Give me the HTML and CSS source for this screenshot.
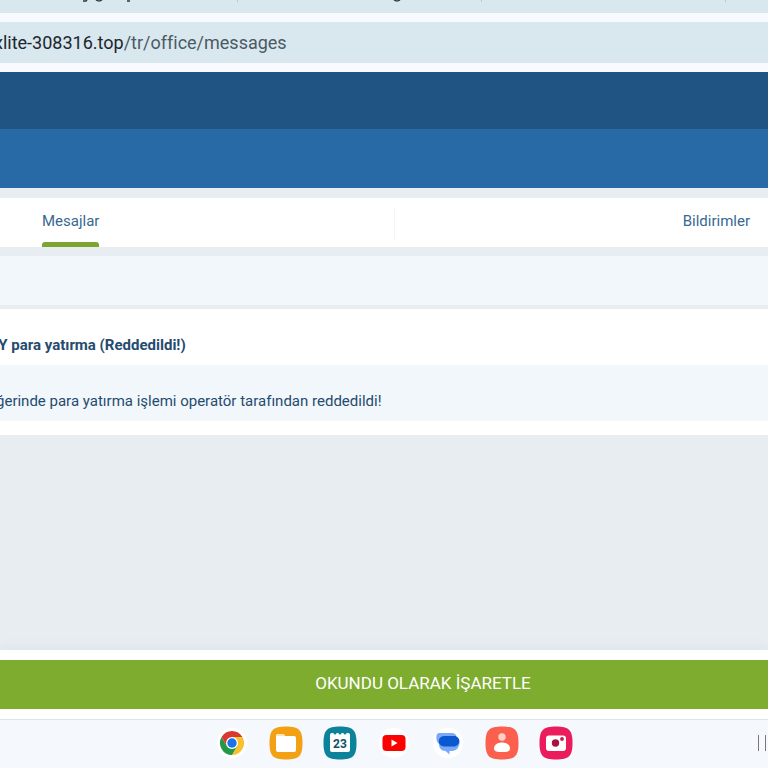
FILE: index.html
```html
<!DOCTYPE html>
<html lang="tr">
<head>
    <meta charset="UTF-8">
    <meta name="viewport" content="width=device-width, initial-scale=1.0">
    <title>Mesajlar</title>
    <link rel="stylesheet" href="styles.css">
</head>
<body>
    <div class="browser-bar">
        <div class="tab-strip">
            <svg class="tab-marks" width="768" height="4" aria-hidden="true">
                <path d="M83 1H86L87 0M96 0Q99 2 102 0M127 1H130M394 0Q397 2 400 0" fill="none" stroke="#2c3a42" stroke-width="1.500"/>
                <path d="M237.500 0V2M481.500 0V2M725.500 0V2" stroke="#b9c7ce"/>
            </svg>
        </div>
        <div class="address-bar"><span class="host">xlite-308316.top</span>/tr/office/messages</div>
    </div>

    <header class="site-header">
        <div class="header-top"></div>
        <div class="header-nav"></div>
    </header>

    <main class="office">
        <nav class="tabs">
            <a href="#mesajlar" class="tab active">Mesajlar</a>
            <a href="#bildirimler" class="tab">Bildirimler</a>
        </nav>
        <div class="filter-row"></div>
        <article class="message">
            <h2 class="message-title">RY para yatırma (Reddedildi!)</h2>
            <p class="message-text">ğerinde para yatırma işlemi operatör tarafından reddedildi!</p>
        </article>
    </main>

    <div class="actions">
        <button type="button" class="mark-read">OKUNDU OLARAK İŞARETLE</button>
    </div>

    <footer class="taskbar">
        <div class="apps">
            <svg class="app" viewBox="0 0 34 34">
                <circle cx="17" cy="17" r="15" fill="#fff"/>
                <path d="M17 11H27.400A12 12 0 0 1 17 29L22.200 20Z" fill="#fbc02d"/>
                <path d="M6.600 11A12 12 0 0 0 17 29L22.200 20 17 17 11.800 20Z" fill="#249847"/>
                <path d="M6.600 11A12 12 0 0 1 27.400 11H17V17L11.800 20Z" fill="#d93a30"/>
                <circle cx="17" cy="17" r="6" fill="#fff"/>
                <circle cx="17" cy="17" r="4.700" fill="#1a73e8"/>
            </svg>
            <svg class="app" viewBox="0 0 34 34">
                <path d="M17 .5C30 .5 33.500 4 33.500 17S30 33.500 17 33.500.5 30 .5 17 4 .5 17 .5Z" fill="#f3a114"/>
                <path d="M7 10Q7 8 9 8H14.500L16 10H25Q27 10 27 12V24Q27 26 25 26H9Q7 26 7 24Z" fill="#fff"/>
                <path d="M7 10Q7 8 9 8H14.500L16 10H7Z" fill="#fde3b0"/>
            </svg>
            <svg class="app" viewBox="0 0 34 34">
                <path d="M17 .5C30 .5 33.500 4 33.500 17S30 33.500 17 33.500.5 30 .5 17 4 .5 17 .5Z" fill="#0d839b"/>
                <path d="M7 9Q7 7 9 7H10.500A1.500 1.500 0 0 0 13.500 7H15.500A1.500 1.500 0 0 0 18.500 7H20.500A1.500 1.500 0 0 0 23.500 7H25Q27 7 27 9V24Q27 26 25 26H9Q7 26 7 24Z" fill="#fff"/>
                <text x="17" y="22" class="day">23</text>
            </svg>
            <svg class="app" viewBox="0 0 34 34">
                <circle cx="17" cy="17" r="15" fill="#fff"/>
                <rect x="5.500" y="9" width="23" height="16" rx="4" fill="#f00"/>
                <path d="M14.500 13.500V20.500L20.500 17Z" fill="#fff"/>
            </svg>
            <svg class="app" viewBox="0 0 34 34">
                <circle cx="17" cy="17" r="15" fill="#fff"/>
                <path d="M9 7H20C24 7 25.500 9 25.500 11 28 12 29 14 28.500 17 28 22 25 25 20.500 25H18.500V28.500L14.500 25C10 25 8 21.500 8 18 5.500 16 5 13 5.500 9.500 6 7.500 7 7 9 7Z" fill="#78a8f8"/>
                <path d="M13 10H23C30 10 30 20.500 22.500 20.500H13C6 20.500 6 10 13 10Z" fill="#0b57d0"/>
            </svg>
            <svg class="app" viewBox="0 0 34 34">
                <path d="M17 .5C30 .5 33.500 4 33.500 17S30 33.500 17 33.500.5 30 .5 17 4 .5 17 .5Z" fill="#fb5f4e"/>
                <circle cx="17" cy="11" r="3.700" fill="#ffd0ca"/>
                <path d="M9 22.500C9 14.500 25 14.500 25 22.500 25 25.500 22 26 17 26S9 25.500 9 22.500Z" fill="#fff"/>
            </svg>
            <svg class="app" viewBox="0 0 34 34">
                <path d="M17 .5C30 .5 33.500 4 33.500 17S30 33.500 17 33.500.5 30 .5 17 4 .5 17 .5Z" fill="#eb1c5b"/>
                <rect x="7" y="9.500" width="20" height="15.500" rx="3" fill="#fff"/>
                <circle cx="16.500" cy="17" r="3.700" fill="#a8123e"/>
                <circle cx="23" cy="13" r="1.900" fill="#c41a4c"/>
            </svg>
        </div>
        <span class="recents"></span>
    </footer>
</body>
</html>
```
FILE: styles.css
```css
* {
    box-sizing: border-box;
}

body {
    display: flex;
    flex-direction: column;
    min-height: 100vh;
    margin: 0;
    overflow-x: hidden;
    background: #e8edf1;
    color: #254b6e;
    font-family: Roboto, sans-serif;
    font-size: 15px;
}

.browser-bar {
    padding-bottom: 9px;
    background: #f7fbff;
}

.tab-strip {
    height: 13px;
    margin-bottom: 9px;
    overflow: hidden;
    background: #d9e7ef;
}

.tab-marks {
    display: block;
}

.address-bar {
    height: 41px;
    background: #d9e7ef;
    color: #4b5a63;
    font-size: 18px;
    line-height: 41px;
    text-indent: -6px;
    white-space: nowrap;
}

.host {
    color: #1c262c;
}

.header-top {
    height: 57px;
    background: #205583;
}

.header-nav {
    height: 59px;
    background: #276aa5;
}

.office {
    flex: 1;
    padding-top: 10px;
}

.tabs {
    display: flex;
    justify-content: space-between;
    height: 49px;
    padding: 0 18px 0 42px;
    background: linear-gradient(#f3f5f7, #f3f5f7) 394px 10px / 1px 32px no-repeat #fff;
}

.tab {
    color: #376891;
    line-height: 46px;
    text-decoration: none;
}

.tab.active::after {
    content: "";
    display: block;
    height: 5px;
    margin-top: -2px;
    border-radius: 3px 3px 0 0;
    background: #7aa52f;
}

.filter-row {
    height: 49px;
    margin: 9px 0 4px;
    background: #f2f7fc;
}

.message {
    padding-bottom: 14px;
    background: #fff;
}

.message-title,
.message-text {
    height: 56px;
    margin: 0;
    padding-top: 8px;
    font-size: 15px;
    line-height: 56px;
    white-space: nowrap;
}

.message-title {
    font-weight: 700;
    text-indent: -11px;
}

.message-text {
    background: #f2f7fc;
    text-indent: -4px;
}

.actions {
    padding: 10px 0;
    background: #fff;
    box-shadow: 0 -2px 10px #dde3ef;
}

.mark-read {
    display: block;
    width: 100%;
    height: 49px;
    padding: 0 0 3px 78px;
    border: 0;
    background: #7eac2f;
    color: #fff;
    font-family: inherit;
    font-size: 17px;
}

.taskbar {
    display: flex;
    align-items: center;
    height: 49px;
    padding-bottom: 2px;
    border-top: 1px solid #dfe4e9;
    background: #f5f9fe;
}

.apps {
    display: flex;
    gap: 20px;
    margin: 0 auto;
    padding-left: 30px;
}

.app {
    width: 34px;
    height: 34px;
}

.day {
    fill: #0b5265;
    font-size: 12px;
    font-weight: 700;
    text-anchor: middle;
}

.recents {
    width: 10px;
    height: 16px;
    background: linear-gradient(90deg, #777 1px, transparent 1px 7px, #777 7px 8px, transparent 8px);
}
```
